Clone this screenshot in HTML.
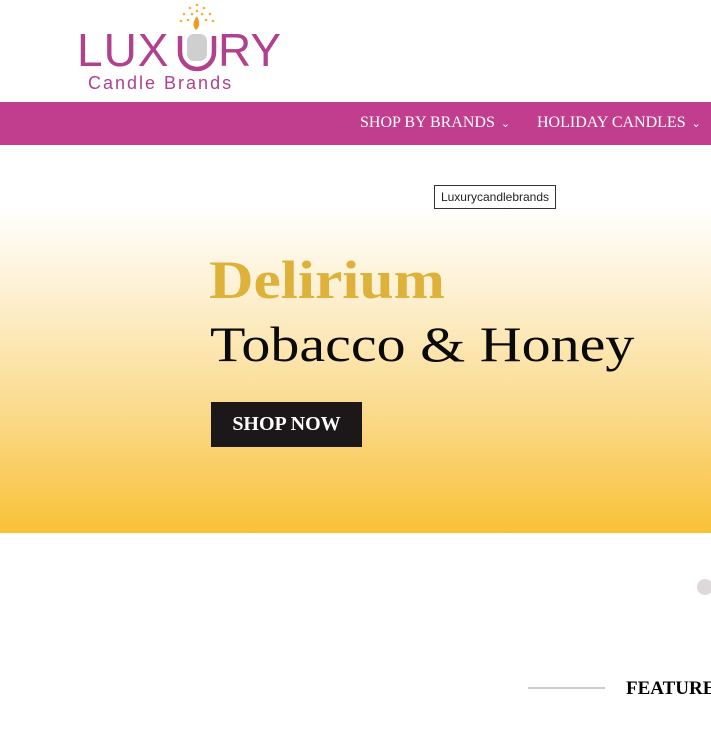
<!DOCTYPE html>
<html><head><meta charset="utf-8"><style>
*{margin:0;padding:0;box-sizing:border-box}
body{width:711px;height:733px;overflow:hidden;background:#fff;position:relative;font-family:"Liberation Serif",serif}
.logo{position:absolute;left:72px;top:0;width:220px;height:100px}
.nav{position:absolute;left:0;top:102px;width:711px;height:43px;background:#c13e8e;color:#fff;font-size:16px}
.nav span{position:absolute;top:12px;white-space:nowrap}
.nav small{font-size:11px;margin-left:6px}
.hero{position:absolute;left:0;top:145px;width:711px;height:388px;background:linear-gradient(to bottom,#fff 0,#fff 60px,#fdf0d0 150px,#fad98a 270px,#f9c136 388px)}
.tip{position:absolute;left:434px;top:185px;width:122px;height:24px;border:1px solid #333;background:#fff;font:12px "Liberation Sans",sans-serif;color:#222;text-align:center;line-height:22px}
.h1{position:absolute;left:209px;top:248px;font-size:54px;font-weight:bold;color:#deb23a;line-height:64px;transform:scaleX(1.14);transform-origin:0 0;white-space:nowrap}
.h2{position:absolute;left:210px;top:313px;font-size:50px;color:#0a0a0a;line-height:62px;transform:scaleX(1.16);transform-origin:0 0;white-space:nowrap}
.btn{position:absolute;left:211px;top:402px;width:151px;height:45px;background:#1c1718;color:#fff;font-size:20px;font-weight:bold;text-align:center;line-height:45px}
.dot{position:absolute;left:697px;top:579px;width:16px;height:16px;border-radius:50%;background:#ddd8da}
.line{position:absolute;left:528px;top:687px;width:77px;height:2px;background:#ccc}
.feat{position:absolute;left:626px;top:678px;font-size:19px;font-weight:bold;color:#000;white-space:nowrap}
</style></head><body>
<svg class="logo" viewBox="0 0 220 100">
<g fill="#f2b233">
<circle cx="125" cy="5" r="1.3"/><circle cx="118" cy="8" r="1.3"/><circle cx="132" cy="8" r="1.3"/><circle cx="112" cy="14" r="1.3"/><circle cx="138" cy="14" r="1.3"/><circle cx="109" cy="21" r="1.3"/><circle cx="141" cy="21" r="1.3"/><circle cx="120" cy="14" r="1.3"/><circle cx="130" cy="14" r="1.3"/><circle cx="116" cy="20" r="1.3"/><circle cx="134" cy="20" r="1.3"/><circle cx="125" cy="11" r="1.3"/>
</g>
<path d="M125 16c-4 6-5 10-1 14 4-3 4-8 1-14z" fill="#f29a1f"/>
<path d="M108 36v16a17 17 0 0 0 34 0v-16" fill="none" stroke="#b0418e" stroke-width="4.5"/>
<rect x="115" y="34" width="20" height="27" rx="7" fill="#cfcfcf"/>
<text x="5" y="66" font-family="Liberation Sans,sans-serif" font-size="46" fill="#b0418e" letter-spacing="1">LUX</text>
<text x="146" y="66" font-family="Liberation Sans,sans-serif" font-size="46" fill="#b0418e">RY</text>
<text x="16" y="89" font-family="Liberation Sans,sans-serif" font-size="18" fill="#b0418e" letter-spacing="2">Candle Brands</text>
</svg>
<div class="nav"><span style="left:360px">SHOP BY BRANDS<small>⌄</small></span><span style="left:537px">HOLIDAY CANDLES<small>⌄</small></span></div>
<div class="hero"></div>
<div class="tip">Luxurycandlebrands</div>
<div class="h1">Delirium</div>
<div class="h2">Tobacco &amp; Honey</div>
<div class="btn">SHOP NOW</div>
<div class="dot"></div>
<div class="line"></div>
<div class="feat">FEATURED</div>
</body></html>
